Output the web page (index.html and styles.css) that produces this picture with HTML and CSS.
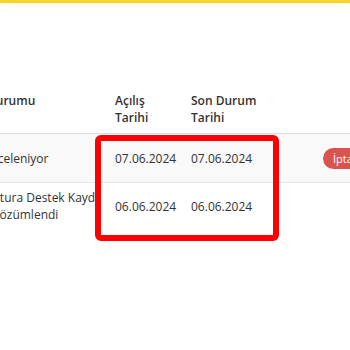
FILE: index.html
```html
<!DOCTYPE html>
<html lang="tr">
<head>
<meta charset="utf-8">
<link rel="stylesheet" href="styles.css">
</head>
<body>
<div class="topbar"></div>
<div class="stage">
  <table class="tickets">
    <colgroup>
      <col class="c-status">
      <col class="c-open">
      <col class="c-last">
      <col class="c-gap">
      <col class="c-act">
    </colgroup>
    <thead>
      <tr>
        <th>Durumu</th>
        <th>Açılış Tarihi</th>
        <th>Son Durum Tarihi</th>
        <th></th>
        <th></th>
      </tr>
    </thead>
    <tbody>
      <tr class="row-a">
        <td><span class="lead-in">İnceleniyor</span></td>
        <td>07.06.2024</td>
        <td>07.06.2024</td>
        <td></td>
        <td><span class="badge">İptal</span></td>
      </tr>
      <tr class="row-b">
        <td><span class="line-1">Fatura Destek Kaydı</span><span class="line-2">Çözümlendi</span></td>
        <td>06.06.2024</td>
        <td>06.06.2024</td>
        <td></td>
        <td></td>
      </tr>
    </tbody>
  </table>
  <div class="highlight"></div>
</div>
</body>
</html>
```

FILE: styles.css
```css
html, body {
  margin: 0;
  padding: 0;
  background: #ffffff;
}

body {
  font-family: "Open Sans", "Liberation Sans", sans-serif;
  font-size: 12px;
  line-height: 17px;
  color: #333333;
  width: 350px;
  height: 350px;
  overflow: hidden;
}

.topbar {
  height: 3px;
  background: #f9d52b;
  box-shadow: 0 2px 8px rgba(249, 213, 43, 0.25);
}

.stage {
  position: relative;
  padding-top: 81px;
}

.tickets {
  border-collapse: collapse;
  table-layout: fixed;
  width: 416px;
  margin-left: -21px;
}

.c-status { width: 128px; }
.c-open { width: 76px; }
.c-last { width: 84px; }
.c-gap { width: 48px; }
.c-act { width: 80px; }

.tickets th {
  text-align: left;
  font-weight: 600;
  vertical-align: top;
  padding: 8px 8px 7px;
  border-bottom: 1px solid #dedede;
}

.tickets td {
  padding: 8px;
  vertical-align: middle;
  white-space: normal;
}

.row-a td {
  background: #f9f9f9;
  height: 32px;
  border-bottom: 1px solid #e6e6e6;
}

.row-b td {
  padding: 6px 8px 7px;
  height: 34px;
}

.line-1, .line-2 {
  display: block;
  white-space: nowrap;
}

.line-2 {
  margin-left: 5px;
}

.badge {
  display: inline-block;
  background: #d9534f;
  color: #ffffff;
  font-size: 11px;
  line-height: 15px;
  padding: 3px 10px;
  border-radius: 11px;
}

.highlight {
  position: absolute;
  left: 95px;
  top: 132px;
  width: 184px;
  height: 106px;
  box-sizing: border-box;
  border: 6px solid #ff0000;
  border-radius: 6px;
}
```
